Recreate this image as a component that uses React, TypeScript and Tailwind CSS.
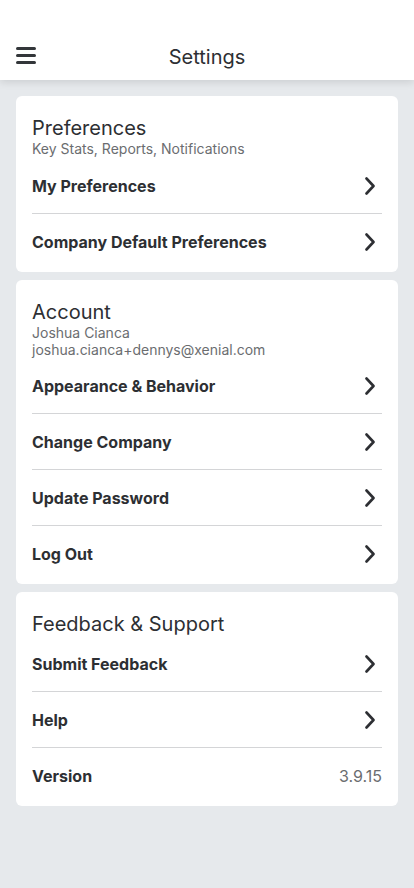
import React from 'react';

const Chevron = () => (
  <svg width="12" height="18" viewBox="0 0 12 18" fill="none" className="mr-[6px] shrink-0">
    <path d="M2.5 1.5 L9.5 9 L2.5 16.5" stroke="#2d2f33" strokeWidth="2.6" strokeLinecap="round" strokeLinejoin="round" />
  </svg>
);

type RowProps = { label: string; value?: string; last?: boolean };

const Row = ({ label, value, last }: RowProps) => (
  <div className={`flex h-14 items-center justify-between ${last ? '' : 'border-b border-[#d4d5d7]'}`}>
    <span className="text-base font-bold text-[#2d2f33]">{label}</span>
    {value ? <span className="text-base text-[#6b6d70]">{value}</span> : <Chevron />}
  </div>
);

const Card = ({ children }: { children: React.ReactNode }) => (
  <div className="rounded-md bg-white px-4 pt-5 pb-[2px]">{children}</div>
);

const App = () => {
  return (
    <div className="min-h-[888px] bg-[#e6e9ec] font-['Inter',sans-serif]">
      {/* header */}
      <div className="relative z-10 h-20 bg-white pt-[35px] shadow-[0_2px_8px_rgba(0,0,0,0.12)]">
        <div className="relative flex h-11 items-center justify-center">
          <div className="absolute left-4 top-[12px] flex w-5 flex-col gap-[4px]">
            <span className="block h-[3px] rounded-sm bg-[#33363a]" />
            <span className="block h-[3px] rounded-sm bg-[#33363a]" />
            <span className="block h-[3px] rounded-sm bg-[#33363a]" />
          </div>
          <span className="text-xl text-[#2d2f33]">Settings</span>
        </div>
      </div>

      <div className="flex flex-col gap-2 px-4 pt-4">
        {/* Preferences */}
        <Card>
          <div className="text-xl leading-6 text-[#2d2f33]">Preferences</div>
          <div className="text-sm leading-[18px] text-[#6b6d70]">Key Stats, Reports, Notifications</div>
          <Row label="My Preferences" />
          <Row label="Company Default Preferences" last />
        </Card>

        {/* Account */}
        <Card>
          <div className="text-xl leading-6 text-[#2d2f33]">Account</div>
          <div className="text-sm leading-[17px] text-[#6b6d70]">Joshua Cianca</div>
          <div className="text-sm leading-[17px] text-[#6b6d70]">joshua.cianca+dennys@xenial.com</div>
          <Row label="Appearance & Behavior" />
          <Row label="Change Company" />
          <Row label="Update Password" />
          <Row label="Log Out" last />
        </Card>

        {/* Feedback */}
        <Card>
          <div className="text-xl leading-6 text-[#2d2f33]">Feedback &amp; Support</div>
          <Row label="Submit Feedback" />
          <Row label="Help" />
          <Row label="Version" value="3.9.15" last />
        </Card>
      </div>
    </div>
  );
};

export default App;
